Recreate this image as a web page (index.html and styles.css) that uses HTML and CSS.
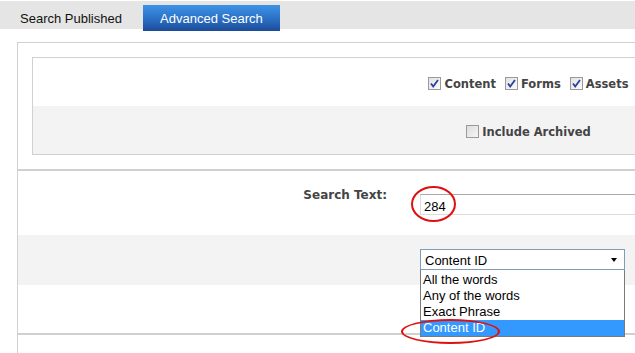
FILE: index.html
```html
<!DOCTYPE html>
<html lang="en">

<head>
    <meta charset="UTF-8">
    <title>Advanced Search</title>
    <link rel="stylesheet" href="styles.css">
</head>

<body>
    <div class="tabs">
        <span class="tab">Search Published</span>
        <span class="tab active">Advanced Search</span>
    </div>

    <div class="panel">
        <div class="section first">
            <div class="filters">
                <div class="filter-row">
                    <label class="check"><span class="box checked"><svg viewBox="0 0 13 13" width="13" height="13"><path d="M3 6.5 L5.2 9.5 L10 3" fill="none" stroke="#2d3f9a" stroke-width="1.8"/></svg></span>Content</label>
                    <label class="check"><span class="box checked"><svg viewBox="0 0 13 13" width="13" height="13"><path d="M3 6.5 L5.2 9.5 L10 3" fill="none" stroke="#2d3f9a" stroke-width="1.8"/></svg></span>Forms</label>
                    <label class="check"><span class="box checked"><svg viewBox="0 0 13 13" width="13" height="13"><path d="M3 6.5 L5.2 9.5 L10 3" fill="none" stroke="#2d3f9a" stroke-width="1.8"/></svg></span>Assets</label>
                </div>
                <div class="filter-row alt">
                    <label class="check"><span class="box"></span>Include Archived</label>
                </div>
            </div>
        </div>

        <div class="section">
            <div class="form-row">
                <div class="label">Search Text:</div>
                <div class="field">
                    <div class="text-input">284</div>
                    <span class="mark mark-text"></span>
                </div>
            </div>
            <div class="form-row alt mode">
                <div class="label"></div>
                <div class="field">
                    <div class="select">
                        <span>Content ID</span>
                        <span class="arrow"></span>
                    </div>
                    <ul class="options">
                        <li>All the words</li>
                        <li>Any of the words</li>
                        <li>Exact Phrase</li>
                        <li class="selected">Content ID</li>
                    </ul>
                    <span class="mark mark-option"></span>
                </div>
            </div>
            <div class="form-row blank"></div>
        </div>
        <div class="section rest"></div>
    </div>
</body>

</html>
```

FILE: styles.css
```css
body {
    margin: 0;
    background: #fff;
    font-family: "Liberation Sans", Arial, sans-serif;
    overflow: hidden;
}

/* tab strip */
.tabs {
    display: flex;
    align-items: flex-start;
    height: 28px;
    margin-top: 1px;
    padding-left: 20px;
    background: #e5e5e5;
    font-size: 13px;
}

.tab {
    padding-top: 10px;
    color: #111;
}

.tab.active {
    margin-left: 21px;
    margin-top: 4px;
    width: 137px;
    height: 26px;
    padding-top: 6px;
    box-sizing: border-box;
    text-align: center;
    color: #fff;
    background: linear-gradient(#3d93e6, #2a6fc4 55%, #1c4b98);
}

/* main panel */
.panel {
    margin: 13px 0 0 17px;
    width: 1040px;
    border-left: 1px solid #d0d0d0;
    border-top: 1px solid #d0d0d0;
}

.section {
    border-bottom: 2px solid #d0d0d0;
}

.section.first {
    padding: 14px 0 14px 14px;
}

.filters {
    width: 991px;
    border: 1px solid #d0d0d0;
    border-right: none;
}

.filter-row {
    display: flex;
    justify-content: center;
    align-items: center;
    gap: 9px;
    height: 48px;
    padding-top: 3px;
    box-sizing: border-box;
}

.alt {
    background: #f3f3f3;
}

.check {
    display: flex;
    align-items: center;
    gap: 3px;
    font-family: "DejaVu Sans", Verdana, sans-serif;
    font-weight: bold;
    font-size: 11.5px;
    color: #444;
}

.box {
    display: inline-block;
    width: 13px;
    height: 13px;
    box-sizing: border-box;
    border: 1px solid #9a9a9a;
    background: linear-gradient(135deg, #dcdcdc, #f6f6f6);
}

.box svg {
    display: block;
    margin: -1px;
}

.box.checked {
    background: linear-gradient(135deg, #e2e2e2, #fbfbfb);
}

/* form rows */
.form-row {
    display: grid;
    grid-template-columns: 369px 1fr;
    column-gap: 33px;
}

.form-row:first-child {
    height: 64px;
    padding-top: 16px;
    box-sizing: border-box;
}

.form-row:first-child .field {
    margin-top: 7px;
}

.form-row.mode {
    height: 50px;
    padding-top: 14px;
    box-sizing: border-box;
}

.form-row.blank {
    height: 48px;
}

.label {
    text-align: right;
    padding-top: 1px;
    font-family: "DejaVu Sans", Verdana, sans-serif;
    font-weight: bold;
    font-size: 12px;
    color: #444;
}

.field {
    position: relative;
}

.text-input {
    height: 21px;
    box-sizing: border-box;
    padding: 4px 0 0 3px;
    border: 1px solid #dcdcdc;
    border-top-color: #a9a9a9;
    border-right: none;
    font-size: 13px;
    color: #000;
}

.select {
    position: relative;
    width: 205px;
    height: 21px;
    box-sizing: border-box;
    padding: 3px 0 0 4px;
    border: 1px solid #7f9db9;
    background: #fff;
    font-size: 13px;
    color: #000;
}

.arrow {
    position: absolute;
    right: 7px;
    top: 8px;
    border-left: 3.5px solid transparent;
    border-right: 3.5px solid transparent;
    border-top: 4px solid #000;
}

.options {
    position: absolute;
    left: 0;
    top: 21px;
    z-index: 2;
    width: 205px;
    margin: 0;
    padding: 2px 0 0;
    box-sizing: border-box;
    list-style: none;
    border: 1px solid #7a7a7a;
    border-top: none;
    background: #fff;
    font-size: 13px;
    color: #000;
}

.options li {
    height: 16px;
    line-height: 16px;
    padding-left: 2px;
}

.options li.selected {
    background: #3399ff;
    color: #fff;
}

.section.rest {
    height: 40px;
    border-bottom: none;
}

/* red annotation rings */
.mark {
    position: absolute;
    z-index: 3;
    border: 2px solid #e01010;
    border-radius: 50%;
}

.mark-text {
    left: -9px;
    top: -8px;
    width: 41px;
    height: 32px;
}

.mark-option {
    left: -19px;
    top: 70px;
    width: 95px;
    height: 21px;
}
```
